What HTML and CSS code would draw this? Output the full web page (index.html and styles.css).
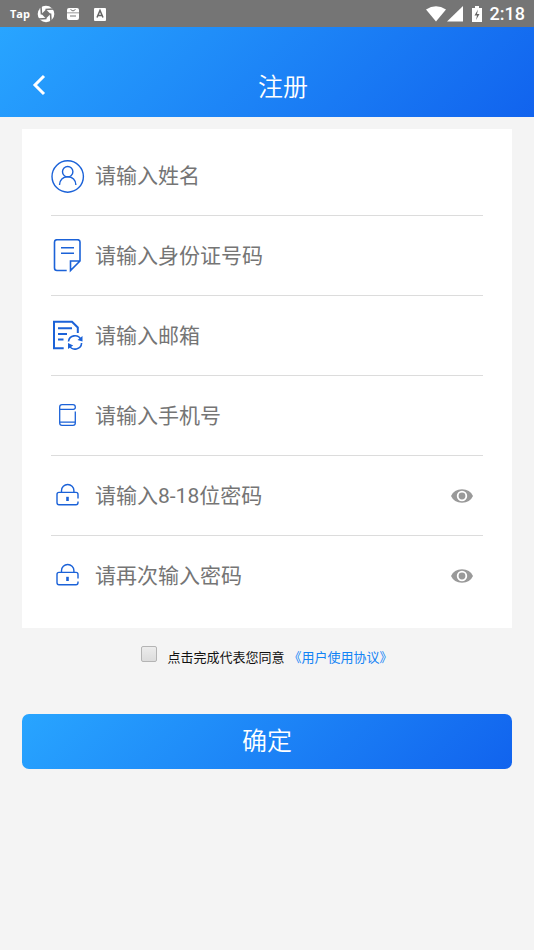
FILE: index.html
```html
<!DOCTYPE html>
<html lang="zh-CN">
<head>
<meta charset="utf-8">
<meta name="viewport" content="width=device-width, initial-scale=1">
<title>注册</title>
<link rel="stylesheet" href="styles.css">
</head>
<body>
<div class="status">
  <div class="status-group">
    <span class="tap">Tap</span>
    <svg class="shutter" width="18" height="18" viewBox="0 0 18 18"><circle cx="9" cy="9" r="8.3" fill="#fff"/><path d="M9 4.500L13.500 9 9 13.500 4.500 9z" fill="#757575"/><path d="M4.500 9.500L4 2M8.500 4.500L16 4M13.500 8.500L14 16M9.500 13.500L2 14" stroke="#757575" stroke-width="1.600" fill="none"/></svg>
    <svg class="bag" width="14" height="14" viewBox="0 0 14 14"><path d="M3 1h8q2 0 2 2v2.500H1V3q0-2 2-2zM1 6.200h12V11q0 2-2 2H3q-2 0-2-2z" fill="#fff"/><path d="M4.500 2.500q2.500 3 5 0M4 9h6" stroke="#757575" fill="none"/></svg>
    <svg width="12" height="14" viewBox="0 0 12 14"><rect y="1" width="12" height="13" rx="1" fill="#fff"/><path d="M3 10.500L6 3.500l3 7M4 8.500h4" stroke="#666" stroke-width="1.500" fill="none"/></svg>
  </div>
  <div class="status-group">
    <svg width="20" height="16" viewBox="0 0 20 16"><path d="M0 3.500Q10-3 20 3.500L10 15.500z" fill="#fff"/></svg>
    <svg class="signal" width="16" height="16" viewBox="0 0 16 16"><path d="M16 0v15.500H0z" fill="#fff"/></svg>
    <svg class="battery" width="10" height="16" viewBox="0 0 10 16"><path d="M3 0h4v2h3v14H0V2h3z" fill="#fff"/><path d="M6 3.500L2.500 9.500H5L4 14l3.500-6H5z" fill="#666"/></svg>
    <span class="clock">2:18</span>
  </div>
</div>

<header class="header">
  <button class="back" type="button" aria-label="返回"><svg width="14" height="22" viewBox="0 0 14 22"><path d="M12 2L3 11l9 9" fill="none" stroke="#fff" stroke-width="3"/></svg></button>
  <h1 class="title">注册</h1>
</header>

<form class="form">
  <div class="card">
    <div class="row">
      <svg class="icon" viewBox="0 0 34 34"><g stroke-width="1.400"><circle cx="16.700" cy="17.500" r="15.700"/><circle cx="16.700" cy="12.700" r="5.200"/><path d="M8.500 26c0-5 3.500-8.200 8.200-8.200s8.200 3.200 8.200 8.200"/></g></svg>
      <input class="field" type="text" placeholder="请输入姓名" aria-label="姓名">
    </div>
    <div class="row">
      <svg class="icon" viewBox="0 0 34 34"><path stroke-width="1.600" d="M15.700 31.500H6Q3.500 31.500 3.500 29V3Q3.500.7 6 .7h20.500Q29 .7 29 3v19L19.500 31.500V22H29M10 8.700h13M10 14.300h13"/></svg>
      <input class="field" type="text" placeholder="请输入身份证号码" aria-label="身份证号码">
    </div>
    <div class="row">
      <svg class="icon" viewBox="0 0 34 34"><path stroke-width="2" d="M12.700 29.200H3V2.800h18l5.800 5.700V14M7 9.300h14M7 15h9M7 20.500h5.500"/><path stroke-width="1.600" d="M17.500 22.500a6.500 6.500 0 0 1 12.300-2M30.600 24a6.500 6.500 0 0 1-12.300 2.500"/><path class="solid" d="M31.500 17v5.500L26.500 21zM17 30v-6l5.200 2.500z"/></svg>
      <input class="field" type="email" placeholder="请输入邮箱" aria-label="邮箱">
    </div>
    <div class="row">
      <svg class="icon" viewBox="0 0 34 34"><path stroke-width="1.300" d="M24.300 12.500V24q0 2.300-2.300 2.300H11q-2.300 0-2.300-2.300V8Q8.700 5.700 11 5.700h11q2.300 0 2.300 2.300v.5q0 1.800-2 1.800H8.700M8.700 23.200h15.600"/></svg>
      <input class="field" type="tel" placeholder="请输入手机号" aria-label="手机号">
    </div>
    <div class="row">
      <svg class="icon" viewBox="0 0 34 34"><path stroke-width="1.400" d="M27 19.500V15.500Q27 13.400 25 13.400H8Q6 13.400 6 15.500v8q0 2.200 2 2.200h17q2 0 2-2.200V22.500M10.500 13v-1.500a6.200 6 0 0 1 12.400 0V13"/><path stroke-width="2.600" d="M16.500 17.800v4.200"/></svg>
      <input class="field" type="password" placeholder="请输入8-18位密码" aria-label="密码">
      <button class="eye" type="button" aria-label="显示密码"><svg width="22" height="14" viewBox="0 0 22 14"><path d="M0 7Q3 .3 11 .3T22 7Q19 13.700 11 13.700T0 7z" fill="#999"/><circle cx="11" cy="7" r="4.300" fill="#999" stroke="#fff" stroke-width="1.800"/></svg></button>
    </div>
    <div class="row">
      <svg class="icon" viewBox="0 0 34 34"><path stroke-width="1.400" d="M27 19.500V15.500Q27 13.400 25 13.400H8Q6 13.400 6 15.500v8q0 2.200 2 2.200h17q2 0 2-2.200V22.500M10.500 13v-1.500a6.200 6 0 0 1 12.400 0V13"/><path stroke-width="2.600" d="M16.500 17.800v4.200"/></svg>
      <input class="field" type="password" placeholder="请再次输入密码" aria-label="再次输入密码">
      <button class="eye" type="button" aria-label="显示密码"><svg width="22" height="14" viewBox="0 0 22 14"><path d="M0 7Q3 .3 11 .3T22 7Q19 13.700 11 13.700T0 7z" fill="#999"/><circle cx="11" cy="7" r="4.300" fill="#999" stroke="#fff" stroke-width="1.800"/></svg></button>
    </div>
  </div>

  <div class="agree">
    <input class="check" type="checkbox" id="agree">
    <div class="agree-text"><label for="agree">点击完成代表您同意</label><a class="link" href="#">《用户使用协议》</a></div>
  </div>

  <button class="submit" type="submit">确定</button>
</form>
</body>
</html>
```
FILE: styles.css
```css
* {
  box-sizing: border-box;
}

body {
  margin: 0;
  background: #f4f4f4;
  font-family: Roboto, "Noto Sans CJK SC", sans-serif;
  color: #111;
}

button {
  padding: 0;
  border: 0;
  background: none;
  font-family: inherit;
}

svg {
  display: block;
}

.status {
  display: flex;
  justify-content: space-between;
  align-items: center;
  height: 27px;
  padding: 0 9px 0 10px;
  background: #757575;
  color: #fff;
}

.status-group {
  display: flex;
  align-items: center;
}

.tap {
  font-family: "Open Sans", sans-serif;
  font-size: 11px;
  font-weight: 700;
  line-height: 16px;
}

.shutter {
  margin: 0 11px 0 7px;
}

.bag {
  margin-right: 14px;
}

.signal {
  margin: 0 9px 0 1px;
}

.battery {
  margin-right: 8px;
}

.clock {
  font-size: 18px;
  font-weight: 500;
  line-height: 24px;
}

.header {
  display: grid;
  grid-template-columns: 46px 1fr 14px;
  align-items: center;
  height: 90px;
  padding: 26px 0 0;
  background: linear-gradient(135deg, #28a5ff, #1163ee);
}

.back {
  display: flex;
  align-items: center;
  justify-content: flex-end;
  height: 48px;
  cursor: pointer;
}

.title {
  margin: 0;
  padding-top: 6px;
  color: #fff;
  font-size: 25px;
  font-weight: 350;
  line-height: 40px;
  text-align: center;
}

.form {
  padding: 12px 22px;
}

.card {
  padding: 7px 29px 12px;
  background: #fff;
}

.row {
  display: flex;
  align-items: center;
  gap: 10px;
  height: 80px;
  border-bottom: 1px solid #dcdcdc;
}

.row:last-child {
  border-bottom-color: transparent;
}

.icon {
  flex: none;
  width: 34px;
  height: 34px;
  fill: none;
  stroke: #1b62d8;
}

.icon .solid {
  fill: #1b62d8;
  stroke: none;
}

.field {
  flex: 1;
  min-width: 0;
  height: 40px;
  padding: 0;
  border: 0;
  outline: 0;
  background: none;
  color: #333;
  font-family: inherit;
  font-size: 21px;
}

.field::placeholder {
  color: #757575;
}

.eye {
  flex: none;
  margin-right: 10px;
  cursor: pointer;
}

.agree {
  display: flex;
  justify-content: center;
  gap: 10px;
  padding: 18px 0 0;
  font-size: 13px;
  line-height: 24px;
}

.agree-text {
  display: flex;
  gap: 4px;
}

.check {
  appearance: none;
  width: 16px;
  height: 16px;
  margin: 0;
  border: 1px solid #b4b4b4;
  border-radius: 2px;
  background: linear-gradient(#ececec, #dcdcdc);
}

.check:checked {
  background: #1b7af3;
}

.link {
  color: #1283f5;
  text-decoration: none;
}

.submit {
  display: block;
  width: 100%;
  height: 55px;
  margin-top: 44px;
  border-radius: 7px;
  background: linear-gradient(135deg, #28a5ff, #1163ee);
  color: #fff;
  font-size: 25px;
  font-weight: 350;
  line-height: 40px;
  cursor: pointer;
}
```
